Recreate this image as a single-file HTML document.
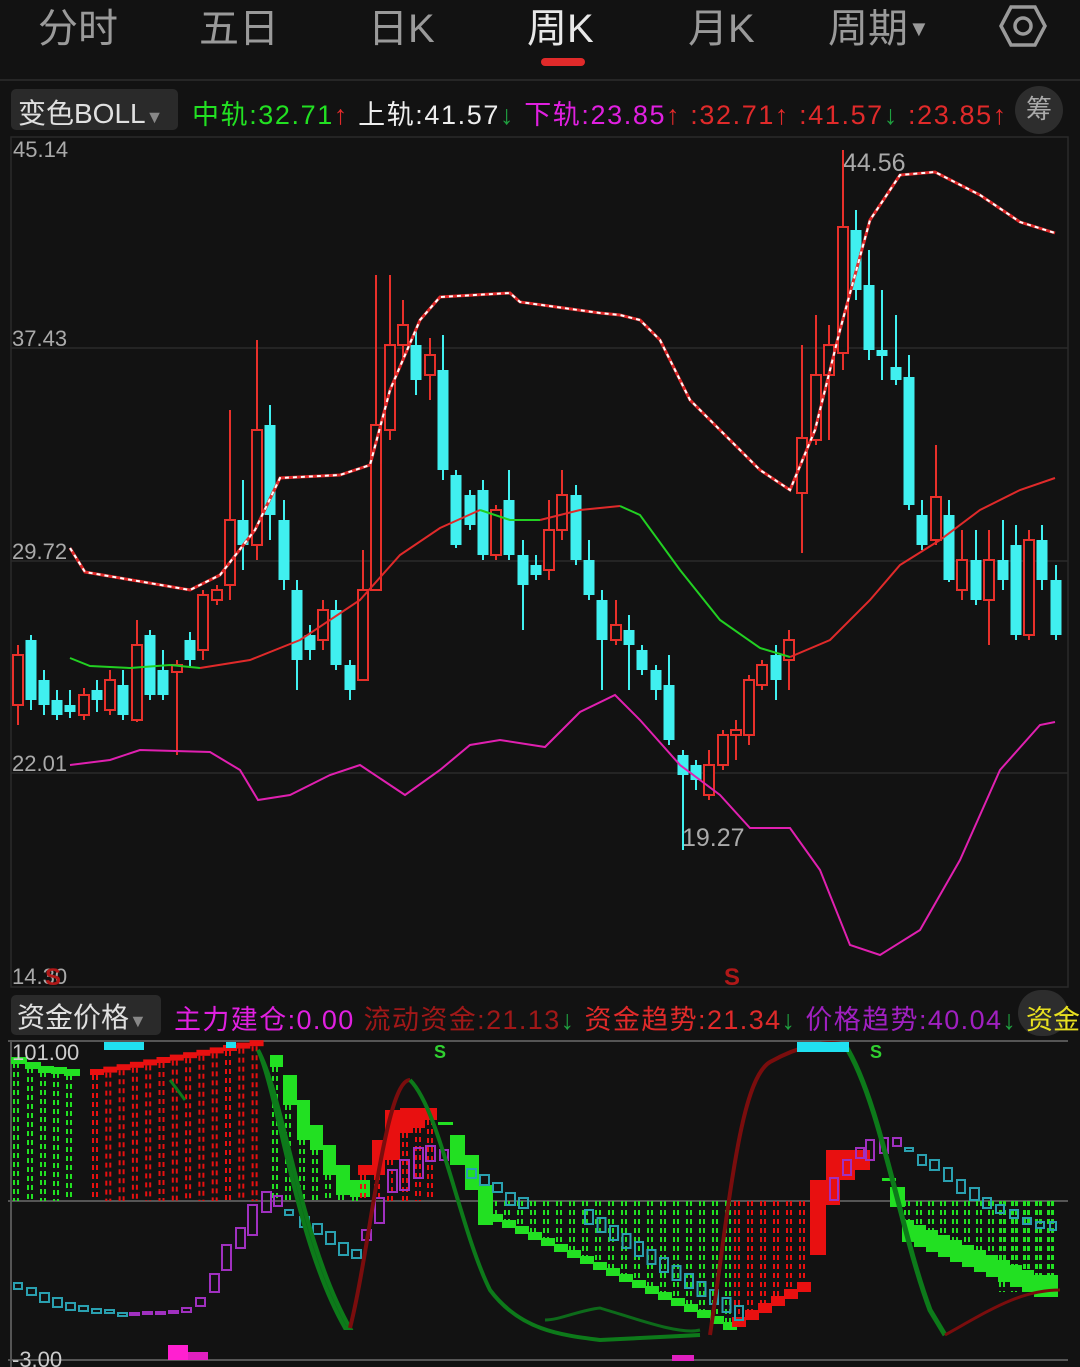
<!DOCTYPE html>
<html><head><meta charset="utf-8"><style>
html,body{margin:0;padding:0;background:#121212;width:1080px;height:1367px;overflow:hidden;font-family:"Liberation Sans","Noto Sans CJK SC",sans-serif}
.tab{position:absolute;top:-4px;font-size:40px;color:#9a9a9a}
.lbl{position:absolute;font-size:27px;white-space:nowrap}
</style></head><body>
<div class="tab" style="left:38px">分时</div>
<div class="tab" style="left:199px">五日</div>
<div class="tab" style="left:368px">日K</div>
<div class="tab" style="left:527px;color:#e8e8e8">周K</div>
<div class="tab" style="left:688px">月K</div>
<div class="tab" style="left:828px">周期<span style="font-size:22px;vertical-align:6px">▼</span></div>
<svg style="position:absolute;left:998px;top:4px" width="50" height="44"><polygon points="13,3 37,3 47,22 37,41 13,41 3,22" fill="none" stroke="#9a9a9a" stroke-width="3.5"/><circle cx="25" cy="22" r="8" fill="none" stroke="#9a9a9a" stroke-width="3.5"/></svg>
<div style="position:absolute;left:541px;top:58px;width:44px;height:8px;border-radius:4px;background:#e02a2a"></div>
<div style="position:absolute;left:0;top:79px;width:1080px;height:2px;background:#262626"></div>
<div style="position:absolute;left:11px;top:89px;width:167px;height:41px;background:#2a2a2a;border-radius:5px"></div>
<div class="lbl" style="left:18px;top:92px;color:#e0e0e0;font-size:28px">变色BOLL<span style="color:#888;font-size:18px">▼</span></div>
<div class="lbl" style="left:192px;top:93px;letter-spacing:1.6px"><span style="color:#22e022">中轨:32.71</span><span style="color:#e02a2a">↑</span> <span style="color:#eee">上轨:41.57</span><span style="color:#1f9f3f">↓</span> <span style="color:#e020e0">下轨:23.85</span><span style="color:#e02a2a">↑ :32.71↑ :41.57</span><span style="color:#1f9f3f">↓</span><span style="color:#e02a2a"> :23.85↑</span></div>
<div style="position:absolute;left:1015px;top:86px;width:48px;height:48px;border-radius:24px;background:#2d2d2d;color:#aaa;font-size:26px;text-align:center;line-height:46px">筹</div>
<div style="position:absolute;left:11px;top:995px;width:150px;height:40px;background:#2a2a2a;border-radius:5px"></div>
<div class="lbl" style="left:17px;top:996px;color:#e0e0e0;font-size:28px">资金价格<span style="color:#888;font-size:18px">▼</span></div>
<div class="lbl" style="left:174px;top:998px;letter-spacing:1.4px"><span style="color:#e020e0">主力建仓:0.00</span> <span style="color:#a01818">流动资金:21.13</span><span style="color:#1f9f3f">↓</span> <span style="color:#e02a2a">资金趋势:21.34</span><span style="color:#1f9f3f">↓</span> <span style="color:#a020c0">价格趋势:40.04</span><span style="color:#1f9f3f">↓</span></div>
<div style="position:absolute;left:1018px;top:990px;width:50px;height:46px;border-radius:24px;background:#2d2d2d"></div>
<div class="lbl" style="left:1026px;top:998px;color:#e8e020">资金</div>
<svg id="s" style="position:absolute;left:0;top:0" width="1080" height="1367">
<g fill="none" stroke="#2a2a2a" stroke-width="1.5">
<rect x="11" y="137" width="1057" height="850"/>
<line x1="11" y1="348" x2="1068" y2="348"/><line x1="11" y1="561" x2="1068" y2="561"/><line x1="11" y1="773" x2="1068" y2="773"/>
</g>
<g fill="#aaa" font-size="22" font-family="Liberation Sans,sans-serif">
<text x="13" y="157">45.14</text><text x="12" y="346">37.43</text><text x="12" y="559">29.72</text><text x="12" y="771">22.01</text><text x="12" y="984">14.30</text>
<text x="843" y="171" font-size="25">44.56</text><text x="682" y="846" font-size="25">19.27</text>
</g>
<text x="45" y="985" fill="#b01818" font-size="24" font-weight="bold">S</text>
<text x="724" y="985" fill="#b01818" font-size="24" font-weight="bold">S</text>
<g id="cd"></g>
<polyline fill="none" stroke="#e02a2a" stroke-width="3" points="70,548 85,572 120,578 190,590 220,575 255,530 280,478 340,475 370,465 390,390 420,320 440,297 510,293 520,302 600,313 620,315 640,320 660,340 690,400 720,430 760,470 790,490 815,430 840,330 870,220 900,175 935,172 980,195 1020,222 1055,233"/>
<polyline fill="none" stroke="#fff" stroke-width="2" stroke-dasharray="4 4" points="70,548 85,572 120,578 190,590 220,575 255,530 280,478 340,475 370,465 390,390 420,320 440,297 510,293 520,302 600,313 620,315 640,320 660,340 690,400 720,430 760,470 790,490 815,430 840,330 870,220 900,175 935,172 980,195 1020,222 1055,233"/>
<polyline fill="none" stroke="#22d022" stroke-width="2" points="70,658 90,666 130,668 170,665 200,668"/>
<polyline fill="none" stroke="#e02a2a" stroke-width="2" points="200,668 250,660 300,640 360,600 400,555 440,528 480,510"/>
<polyline fill="none" stroke="#22d022" stroke-width="2" points="480,510 510,520 540,520"/>
<polyline fill="none" stroke="#e02a2a" stroke-width="2" points="540,520 580,510 620,506"/>
<polyline fill="none" stroke="#22d022" stroke-width="2" points="620,506 640,515 680,570 720,620 760,648 790,657"/>
<polyline fill="none" stroke="#e02a2a" stroke-width="2" points="790,657 830,640 870,600 900,565 940,540 980,510 1020,490 1055,478"/>
<polyline fill="none" stroke="#e020b0" stroke-width="2" points="70,765 110,760 140,750 210,752 240,770 258,800 290,795 330,775 360,765 405,795 440,770 470,745 500,740 545,747 580,712 615,695 640,720 680,765 720,795 750,828 790,828 820,870 850,945 880,955 920,930 960,860 1000,770 1040,725 1055,722"/>
<g stroke="#555" stroke-width="2"><line x1="8" y1="1041" x2="1068" y2="1041"/><line x1="8" y1="1201" x2="1068" y2="1201"/><line x1="8" y1="1360" x2="1068" y2="1360"/><line x1="11" y1="1041" x2="11" y2="1367"/></g>
<g id="low"></g>
<path d="M258 1050 C285 1100 300 1240 350 1328 L345 1328 C295 1240 280 1100 258 1050Z" fill="#0d6a1a" stroke="#0d7a1a" stroke-width="4"/>
<path d="M350 1328 C370 1250 385 1080 410 1080" fill="none" stroke="#7a0d0d" stroke-width="4"/>
<path d="M410 1080 C440 1110 460 1230 490 1290 C520 1330 560 1335 600 1340 L700 1335" fill="none" stroke="#0d7a1a" stroke-width="4"/>
<path d="M710 1335 C730 1200 740 1080 770 1062 C800 1045 830 1040 845 1045" fill="none" stroke="#7a0d0d" stroke-width="4"/>
<path d="M845 1045 C880 1100 900 1230 930 1310 L945 1335" fill="none" stroke="#0d7a1a" stroke-width="5"/>
<path d="M945 1335 C990 1310 1020 1290 1060 1290" fill="none" stroke="#7a0d0d" stroke-width="3"/>
<path d="M545 1320 C560 1320 580 1310 600 1308 C640 1320 680 1335 700 1330" fill="none" stroke="#0d6a1a" stroke-width="3"/>
<path d="M170 1080 L185 1100" stroke="#0d7a1a" stroke-width="3"/>
<rect x="104" y="1042" width="40" height="8" fill="#20e0f0"/><rect x="226" y="1042" width="10" height="6" fill="#20e0f0"/><rect x="797" y="1042" width="52" height="10" fill="#20e0f0"/>
<text x="434" y="1058" fill="#30d030" font-size="18" font-weight="bold">S</text><text x="870" y="1058" fill="#30d030" font-size="18" font-weight="bold">S</text>
<rect x="168" y="1345" width="20" height="15" fill="#ff20d0"/><rect x="188" y="1352" width="20" height="8" fill="#e020c0"/><rect x="672" y="1355" width="22" height="6" fill="#e020c0"/>
<text x="12" y="1060" fill="#ccc" font-size="22">101.00</text><text x="12" y="1367" fill="#ccc" font-size="22">-3.00</text>
</svg>
<script>
var C=[[18,655,705,645,725,1],[31,640,700,635,710,0],[44,680,705,670,715,0],[57,700,715,690,720,0],[70,705,712,690,718,0],[84,695,715,688,720,1],[97,690,700,680,712,0],[110,680,710,670,715,1],[123,685,715,670,720,0],[137,645,720,620,722,1],[150,635,695,630,700,0],[163,670,695,650,700,0],[177,665,672,660,755,1],[190,640,660,632,668,0],[203,595,650,590,660,1],[217,590,600,585,605,1],[230,520,585,410,600,1],[243,520,545,480,570,0],[257,430,545,340,560,1],[270,425,515,405,540,0],[284,520,580,500,590,0],[297,590,660,580,690,0],[310,635,650,625,660,0],[323,610,640,600,650,1],[336,610,665,600,670,0],[350,665,690,660,700,0],[363,590,680,550,680,1],[376,425,590,275,590,1],[390,345,430,275,440,1],[403,325,345,300,360,1],[416,345,380,330,395,0],[430,355,375,338,400,1],[443,370,470,335,480,0],[456,475,545,470,548,0],[470,495,525,490,530,0],[483,490,555,480,560,0],[496,510,555,505,560,1],[509,500,555,470,560,0],[523,555,585,540,630,0],[536,565,575,555,580,0],[549,530,570,500,580,1],[562,495,530,470,540,1],[576,495,560,485,565,0],[589,560,595,540,600,0],[602,600,640,590,690,0],[616,625,640,600,645,1],[629,630,645,615,690,0],[642,650,670,645,675,0],[656,670,690,665,700,0],[669,685,740,655,745,0],[683,755,775,750,850,0],[696,765,780,760,790,0],[709,765,795,750,800,1],[723,735,765,730,770,1],[736,730,735,720,760,1],[749,680,735,675,745,1],[762,665,685,660,690,1],[776,655,680,645,700,0],[789,640,660,630,690,1],[802,438,493,345,553,1],[816,375,440,315,445,1],[829,345,375,325,440,1],[843,227,353,150,370,1],[856,230,290,210,300,0],[869,285,350,250,360,0],[882,350,356,290,380,0],[896,367,380,315,385,0],[909,377,505,355,510,0],[922,515,545,500,550,0],[936,497,540,445,545,1],[949,515,580,500,582,0],[962,560,590,530,600,1],[976,560,600,530,605,0],[989,560,600,530,645,1],[1003,560,580,520,590,0],[1016,545,635,525,640,0],[1029,540,635,530,640,1],[1042,540,580,525,590,0],[1056,580,635,565,640,0]];
var h='';C.forEach(function(c){var col=c[5]?'#e8302a':'#40f0f0';h+='<line x1="'+c[0]+'" y1="'+c[3]+'" x2="'+c[0]+'" y2="'+c[4]+'" stroke="'+col+'" stroke-width="2"/>';
if(c[5])h+='<rect x="'+(c[0]-5)+'" y="'+c[1]+'" width="10" height="'+Math.max(2,c[2]-c[1])+'" fill="#121212" stroke="'+col+'" stroke-width="2"/>';else h+='<rect x="'+(c[0]-5.5)+'" y="'+c[1]+'" width="11" height="'+Math.max(3,c[2]-c[1])+'" fill="'+col+'"/>';});
document.getElementById('cd').innerHTML=h;
var L='',Z=1201;
function col(x,y1,y2,c){L+='<line x1="'+x+'" y1="'+y1+'" x2="'+x+'" y2="'+y2+'" stroke="'+c+'" stroke-width="2" stroke-dasharray="5 4"/><line x1="'+(x+4)+'" y1="'+y1+'" x2="'+(x+4)+'" y2="'+y2+'" stroke="'+c+'" stroke-width="2" stroke-dasharray="5 4"/>';}
function blk(x,y,w,hh,c){L+='<rect x="'+x+'" y="'+y+'" width="'+w+'" height="'+hh+'" fill="'+c+'"/>';}
var G='#22e022',R='#e81010';
[[14,1063],[28,1068],[41,1072],[54,1073],[67,1075]].forEach(function(a){col(a[0],a[1],Z,G);blk(a[0]-3,a[1]-6,16,7,G);});
for(var i=0;i<13;i++){var x=93+i*13.3,y=1075-i*2.4;col(x,y,Z,R);blk(x-3,y-6,14,6,R);}
[[270,1055,13,12],[283,1075,14,30],[297,1100,13,40],[310,1125,13,25],[323,1145,13,30],[336,1165,14,30],[350,1180,20,17]].forEach(function(a){blk(a[0],a[1],a[2],a[3],G);col(a[0]+3,a[1]+a[3],Z,G);});
[[358,1165,14,10],[372,1140,13,35],[385,1110,15,50],[400,1108,13,25],[413,1108,12,20],[425,1108,12,12]].forEach(function(a){blk(a[0],a[1],a[2],a[3],R);col(a[0]+3,a[1]+a[3],Z,R);});
blk(438,1122,15,3,G);
[[450,1135,15,30],[465,1155,14,35],[478,1185,15,40]].forEach(function(a){blk(a[0],a[1],a[2],a[3],G);});
for(i=0;i<19;i++){x=492+i*13;var yb=1220+i*6;if(yb>1335)yb=1335;col(x,Z,yb,G);blk(x-3,yb-6,14,8,G);}
for(i=0;i<6;i++){x=735+i*13;yb=1325-i*7;col(x,Z,yb,R);blk(x-3,yb-8,14,10,R);}
[[810,1180,16,75],[826,1150,14,55],[840,1150,15,30],[855,1150,15,20]].forEach(function(a){blk(a[0],a[1],a[2],a[3],R);});
blk(882,1178,14,3,G);blk(890,1187,15,20,G);
for(i=0;i<13;i++){x=905+i*12;yb=1240+i*5;if(yb>1295)yb=1295;col(x,Z,yb,G);blk(x-3,yb-20,12,22,G);}
for(i=0;i<5;i++){x=1000+i*12;col(x,Z,1292,G);}
function bx(x,y,w,hh,c){L+='<rect x="'+x+'" y="'+y+'" width="'+w+'" height="'+hh+'" fill="none" stroke="'+c+'" stroke-width="2"/>';}
var T='#2aa0b0',P='#a030c0';
[[14,1283,8,6],[27,1288,9,7],[40,1293,9,9],[53,1298,9,9],[66,1303,9,7],[79,1306,9,5],[92,1309,9,4],[105,1310,9,3],[118,1313,9,3]].forEach(function(a){bx(a[0],a[1],a[2],a[3],T);});
[[130,1313,9,2],[143,1312,9,2],[156,1312,9,2],[169,1311,9,2],[182,1308,9,4],[196,1298,9,8],[210,1274,9,18],[222,1245,9,25],[236,1228,9,20],[248,1205,9,30],[262,1192,9,20],[274,1196,8,10]].forEach(function(a){bx(a[0],a[1],a[2],a[3],P);});
[[285,1210,8,5],[300,1217,9,10],[313,1224,9,10],[326,1232,9,12],[339,1243,9,12],[352,1250,9,8]].forEach(function(a){bx(a[0],a[1],a[2],a[3],T);});
[[362,1230,9,10],[375,1198,9,25],[388,1170,9,22],[400,1160,9,30],[414,1148,9,30],[426,1146,9,15],[440,1150,8,10]].forEach(function(a){bx(a[0],a[1],a[2],a[3],P);});
[[467,1169,9,9],[480,1175,9,10],[493,1183,9,9],[506,1193,9,12],[519,1198,9,10]].forEach(function(a){bx(a[0],a[1],a[2],a[3],T);});
for(i=0;i<13;i++)bx(585+i*12.5,1210+i*8,8,14,T);
[[830,1178,8,22],[843,1160,8,15],[856,1148,8,10],[866,1140,8,20],[880,1138,8,15],[893,1138,8,8]].forEach(function(a){bx(a[0],a[1],a[2],a[3],P);});
[[905,1148,8,3],[918,1155,8,10],[930,1160,9,10],[944,1168,8,13],[957,1180,8,13],[970,1188,9,12],[983,1198,8,10],[996,1205,8,8],[1010,1210,8,8],[1023,1218,8,6],[1036,1222,8,6],[1050,1222,6,8]].forEach(function(a){bx(a[0],a[1],a[2],a[3],T);});
document.getElementById('low').innerHTML=L;
</script>
</body></html>
